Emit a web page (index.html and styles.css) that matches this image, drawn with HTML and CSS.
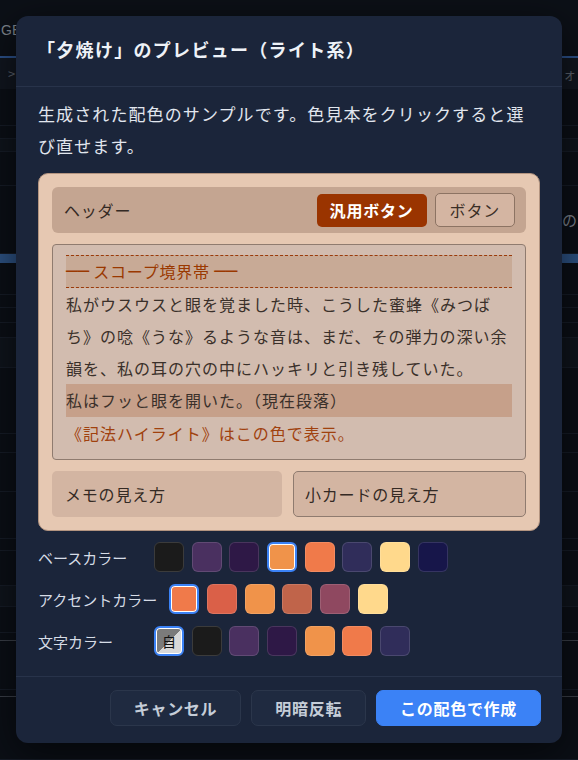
FILE: index.html
```html
<!DOCTYPE html>
<html lang="ja">
<head>
<meta charset="utf-8">
<title>夕焼け プレビュー</title>
<link rel="stylesheet" href="styles.css">
</head>
<body>
<div class="app">
  <div class="app-top"><span class="app-tab">GB</span></div>
  <div class="app-toolbar"><span>&gt;</span><span class="tool-r">フォ</span></div>
  <div class="app-list">
    <div class="r"></div>
    <div class="r"></div>
    <div class="r lite"></div>
    <div class="r"></div>
    <div class="r head"><span>表示の</span></div>
    <div class="r blue"></div>
    <div class="r"></div>
    <div class="r"></div>
    <div class="r"></div>
    <div class="r"></div>
    <div class="r lite"></div>
    <div class="r"></div>
    <div class="r"></div>
    <div class="r"></div>
    <div class="r"></div>
    <div class="r"></div>
    <div class="r"></div>
    <div class="r lite"></div>
    <div class="r"></div>
    <div class="r gray"></div>
    <div class="r"></div>
    <div class="r gray"></div>
    <div class="r"></div>
  </div>
</div>

<div class="overlay">
  <div class="modal">
    <div class="modal-head">
      <h2 class="modal-title">「夕焼け」のプレビュー（ライト系）</h2>
    </div>
    <div class="modal-body">
      <p class="desc">生成された配色のサンプルです。色見本をクリックすると選び直せます。</p>

      <div class="preview">
        <div class="pv-header">
          <span class="pv-title">ヘッダー</span>
          <span class="pv-btn-accent">汎用ボタン</span>
          <span class="pv-btn">ボタン</span>
        </div>
        <div class="pv-scope">
          <div class="pv-band"><span class="rule">──</span> スコープ境界帯 <span class="rule">──</span></div>
          <p class="pv-text">私がウスウスと眼を覚ました時、こうした蜜蜂《みつばち》の唸《うな》るような音は、まだ、その弾力の深い余韻を、私の耳の穴の中にハッキリと引き残していた。</p>
          <p class="pv-text pv-current">私はフッと眼を開いた。（現在段落）</p>
          <p class="pv-text pv-note">《記法ハイライト》はこの色で表示。</p>
        </div>
        <div class="pv-cards">
          <div class="pv-card">メモの見え方</div>
          <div class="pv-card pv-card-bordered">小カードの見え方</div>
        </div>
      </div>

      <div class="colors">
        <div class="color-row">
          <span class="color-label">ベースカラー</span>
          <div class="swatches">
            <span class="sw c-black"></span>
            <span class="sw c-purple"></span>
            <span class="sw c-dpurple"></span>
            <span class="sw c-orange sel"></span>
            <span class="sw c-coral"></span>
            <span class="sw c-navy"></span>
            <span class="sw c-cream"></span>
            <span class="sw c-midnight"></span>
          </div>
        </div>
        <div class="color-row">
          <span class="color-label">アクセントカラー</span>
          <div class="swatches">
            <span class="sw c-coral sel"></span>
            <span class="sw c-red"></span>
            <span class="sw c-orange"></span>
            <span class="sw c-brick"></span>
            <span class="sw c-plum"></span>
            <span class="sw c-cream"></span>
          </div>
        </div>
        <div class="color-row">
          <span class="color-label">文字カラー</span>
          <div class="swatches">
            <span class="sw sw-auto sel">自</span>
            <span class="sw c-black"></span>
            <span class="sw c-purple"></span>
            <span class="sw c-dpurple"></span>
            <span class="sw c-orange"></span>
            <span class="sw c-coral"></span>
            <span class="sw c-navy"></span>
          </div>
        </div>
      </div>
    </div>
    <div class="modal-foot">
      <button class="btn">キャンセル</button>
      <button class="btn">明暗反転</button>
      <button class="btn btn-primary">この配色で作成</button>
    </div>
  </div>
</div>
</body>
</html>
```

FILE: styles.css
```css
* { box-sizing: border-box; }

html, body {
  margin: 0;
  padding: 0;
}

body {
  width: 578px;
  height: 760px;
  overflow: hidden;
  position: relative;
  background: #0a0e15;
  font-family: "Noto Sans CJK JP", "Noto Sans", sans-serif;
  color: #e2e8f0;
}

/* ---------- dimmed background app ---------- */
.app {
  display: flex;
  flex-direction: column;
  height: 760px;
}

.app-top {
  height: 58px;
  display: flex;
  align-items: center;
  padding-top: 4px;
  border-bottom: 2px solid #2b5089;
  background: #0c1017;
  color: #7d838c;
  font-size: 14px;
  font-family: "Liberation Sans", sans-serif;
}

.app-tab { margin-left: 1px; }

.app-toolbar {
  height: 31px;
  display: flex;
  align-items: center;
  justify-content: space-between;
  padding: 0 2px 0 8px;
  background: #11161f;
  color: #5a616c;
  font-size: 13px;
}

.app-list {
  flex: 1;
  display: grid;
  grid-template-rows: 37px 13px 13px 34px 68px 9px 32px 13px 15px 15px 30px 66px 19px 39px 47px 12px 35px 21px 26px 8px 49px 7px 1fr;
}

.r {
  border-bottom: 1px solid #161c27;
  background: #0b0f16;
}

.r.lite { background: #0f141c; }
.r.blue { background: #2d5283; border-bottom: 0; }
.r.gray { border-bottom: 1px solid #3a3f48; }

.r.head {
  display: flex;
  align-items: center;
  justify-content: flex-end;
  padding-right: 1px;
  color: #7b818b;
  font-size: 15px;
}

/* ---------- modal ---------- */
.overlay {
  position: absolute;
  inset: 0;
  padding: 16px;
}

.modal {
  background: #1b253a;
  border-radius: 12px;
  box-shadow: 0 10px 40px rgba(0, 0, 0, 0.6);
}

.modal-head {
  height: 71px;
  display: flex;
  align-items: center;
  padding: 0 21px 5px;
  border-bottom: 1px solid #28334a;
}

.modal-title {
  margin: 0;
  font-size: 18px;
  font-weight: 700;
  letter-spacing: 1.3px;
  color: #eef2f7;
}

.modal-body {
  padding: 11px 22px 0;
}

.desc {
  margin: 0 0 11px;
  font-size: 17px;
  letter-spacing: 1.1px;
  line-height: 32px;
  color: #e1e6ee;
}

/* ---------- preview card ---------- */
.preview {
  background: #e6c8b2;
  border: 1px solid #b39480;
  border-radius: 10px;
  padding: 13px;
  display: flex;
  flex-direction: column;
  gap: 11px;
  color: #342a24;
  font-size: 16px;
  letter-spacing: 0.8px;
}

.pv-header {
  height: 46px;
  background: #c4a591;
  border-radius: 6px;
  display: flex;
  align-items: center;
  gap: 8px;
  padding: 0 11px 0 12px;
}

.pv-title { flex: 1; }

.pv-btn-accent {
  height: 33px;
  display: flex;
  align-items: center;
  padding: 0 13px;
  background: #9a3400;
  color: #fff;
  font-weight: 700;
  border-radius: 5px;
}

.pv-btn {
  height: 34px;
  display: flex;
  align-items: center;
  padding: 0 14px;
  background: #d4b5a2;
  border: 1px solid #8c7363;
  border-radius: 5px;
  color: #3a2e26;
}

.pv-scope {
  background: #d2bcaf;
  border: 1px solid #8f7b6f;
  border-radius: 4px;
  padding: 10px 13px;
}

.pv-band {
  border-top: 1px dashed #9a3a0a;
  border-bottom: 1px dashed #9a3a0a;
  background: #c8aa96;
  line-height: 31px;
  color: #9a3800;
}

.rule {
  font-family: "DejaVu Sans", sans-serif;
  font-size: 19px;
  font-weight: 700;
  letter-spacing: 0;
  line-height: 1;
}

.pv-text {
  margin: 0;
  line-height: 32px;
  letter-spacing: 1px;
  color: #3a302a;
}

.pv-current {
  background: #c6a08a;
  line-height: 33px;
}

.pv-note { color: #a0410e; }

.pv-cards {
  display: grid;
  grid-template-columns: 230px 1fr;
  gap: 11px;
}

.pv-card {
  height: 46px;
  display: flex;
  align-items: center;
  padding: 0 12px 0 13px;
  background: #d3b5a2;
  border-radius: 5px;
}

.pv-card-bordered {
  border: 1px solid #8f7b6f;
  padding-left: 11px;
}

/* ---------- colour rows ---------- */
.colors {
  margin-top: 11px;
  display: flex;
  flex-direction: column;
  gap: 12px;
}

.color-row {
  display: flex;
  align-items: center;
  gap: 12px;
}

.color-label {
  min-width: 104px;
  font-size: 15px;
  color: #d6dce6;
}

.swatches {
  display: flex;
  gap: 7.7px;
}

.sw {
  width: 30px;
  height: 30px;
  border-radius: 6px;
  border: 1px solid rgba(255, 255, 255, 0.13);
  display: flex;
  align-items: center;
  justify-content: center;
}

.sw.sel {
  border: 2px solid #3b82f6;
  box-shadow: inset 0 0 0 1px #ffffff;
}

.c-black { background: #1b1b1b; border-color: #3b3b3b; }
.c-purple { background: #4a3060; }
.c-dpurple { background: #2e1846; }
.c-orange { background: #f0934a; }
.c-coral { background: #f07a4a; }
.c-navy { background: #302d5a; }
.c-cream { background: #ffd98c; }
.c-midnight { background: #17164a; }
.c-red { background: #da6048; }
.c-brick { background: #c0644a; }
.c-plum { background: #8f4860; }

.sw-auto {
  background: linear-gradient(135deg, #7b7b7b 50%, #d9d9d9 50%);
  color: #111;
  font-size: 14px;
  line-height: 1;
}

/* ---------- footer ---------- */
.modal-foot {
  margin-top: 20px;
  border-top: 1px solid #28334a;
  padding: 13px 21px 17px;
  display: flex;
  justify-content: flex-end;
  gap: 10px;
}

.btn {
  height: 36px;
  padding: 0 23px;
  border-radius: 7px;
  border: 1px solid #2b364b;
  background: #1f2a40;
  color: #c5cdd8;
  font-family: inherit;
  font-size: 16px;
  font-weight: 700;
  letter-spacing: 0.7px;
}

.btn-primary {
  background: #3b82f6;
  border-color: #3b82f6;
  color: #ffffff;
}
```
